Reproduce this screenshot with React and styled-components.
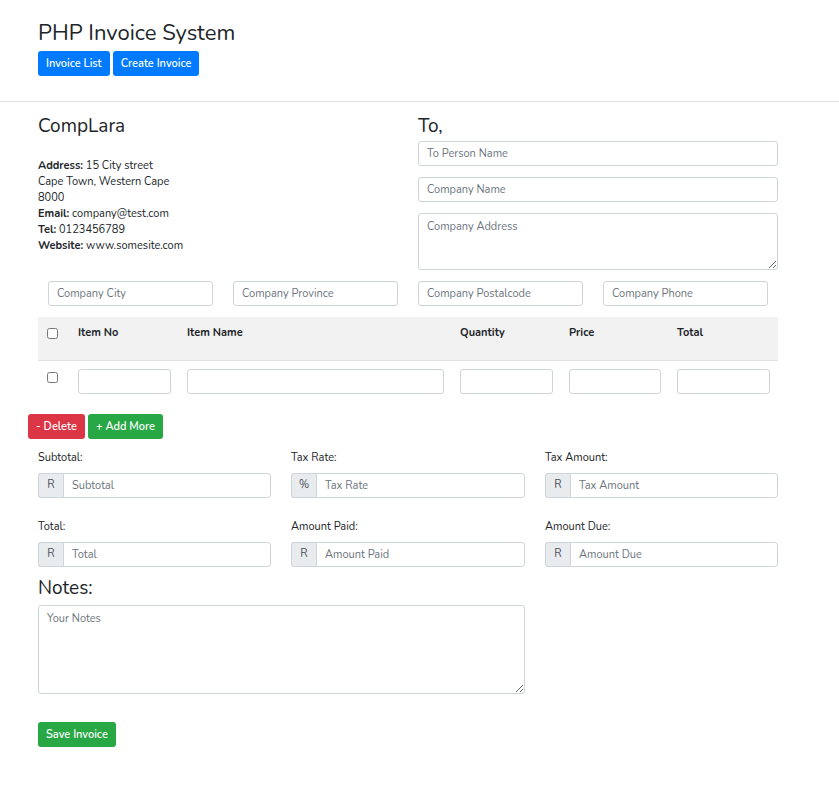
import React from 'react';
import styled, { createGlobalStyle } from 'styled-components';

const Global = createGlobalStyle`
  body {
    margin: 0;
    background: #fff;
    color: #212529;
    font-family: "Nunito", "Lato", "Open Sans", sans-serif;
    font-size: 11px;
    line-height: 16px;
  }
  * { box-sizing: border-box; }
`;

const Header = styled.header`
  padding: 20px 38px 25px;
  border-bottom: 1px solid #e2e2e2;
`;

const Title = styled.h1`
  margin: 0 0 5px;
  font-size: 22px;
  font-weight: 400;
  line-height: 26px;
`;

const Button = styled.button`
  height: 25px;
  padding: 0 8px;
  margin-right: 3px;
  border: none;
  border-radius: 3px;
  font-family: inherit;
  font-size: 11px;
  font-weight: 600;
  color: #fff;
  background: ${(p) => p.$bg || '#007bff'};
`;

const Main = styled.main`
  width: 740px;
  margin-left: 38px;
  padding-top: 13px;
`;

const TopRow = styled.div`
  display: grid;
  grid-template-columns: 360px 360px;
  gap: 20px;
`;

const Heading = styled.h2`
  margin: 0;
  font-size: 19px;
  font-weight: 400;
  line-height: 22px;
`;

const Address = styled.div`
  margin-top: 21px;
  b { font-weight: 700; }
`;

const Stack = styled.div`
  display: flex;
  flex-direction: column;
  gap: 11px;
  > h2 { margin-bottom: -7px; }
`;

const Input = styled.input`
  display: block;
  width: 100%;
  height: 25px;
  padding: 0 8px;
  border: 1px solid #ced4da;
  border-radius: 3px;
  font-family: inherit;
  font-size: 11px;
  color: #495057;
  &::placeholder { color: #6c757d; }
`;

const Area = styled.textarea`
  display: block;
  width: 100%;
  height: ${(p) => p.$h}px;
  padding: 5px 8px;
  border: 1px solid #ced4da;
  border-radius: 3px;
  font-family: inherit;
  font-size: 11px;
  line-height: 16px;
  resize: vertical;
  &::placeholder { color: #6c757d; }
`;

const FourRow = styled.div`
  display: grid;
  grid-template-columns: repeat(4, 1fr);
  margin-top: 11px;
  > * { padding: 0 10px; }
`;

const Table = styled.table`
  width: 740px;
  margin-top: 11px;
  border-collapse: collapse;
  th {
    background: #f2f2f2;
    text-align: left;
    font-weight: 700;
    vertical-align: top;
    height: 43px;
    padding: 8px 8px 0;
    border-bottom: 1px solid #dee2e6;
  }
  td {
    padding: 8px 8px 8px;
    vertical-align: top;
  }
`;

const Check = styled.input.attrs({ type: 'checkbox' })`
  margin: 3px 0 0 1px;
  width: 11px;
  height: 11px;
`;

const Actions = styled.div`
  margin: 12px 0 0 -10px;
  display: flex;
`;

const Totals = styled.div`
  display: grid;
  grid-template-columns: 233px 234px 233px;
  column-gap: 20px;
  row-gap: 21px;
  margin-top: 11px;
`;

const Label = styled.label`
  display: block;
  margin-bottom: 7px;
`;

const Group = styled.div`
  display: flex;
  height: 25px;
  > input {
    border-radius: 0 3px 3px 0;
  }
`;

const Addon = styled.span`
  display: flex;
  align-items: center;
  justify-content: center;
  width: 25px;
  flex: none;
  background: #e9ecef;
  border: 1px solid #ced4da;
  border-right: none;
  border-radius: 3px 0 0 3px;
  color: #495057;
  font-size: 11px;
`;

const Notes = styled.div`
  width: 487px;
  margin-top: 10px;
  > h2 { margin-bottom: 6px; }
`;

const Save = styled(Button)`
  margin-top: 28px;
`;

const totals = [
  ['Subtotal:', 'R', 'Subtotal'],
  ['Tax Rate:', '%', 'Tax Rate'],
  ['Tax Amount:', 'R', 'Tax Amount'],
  ['Total:', 'R', 'Total'],
  ['Amount Paid:', 'R', 'Amount Paid'],
  ['Amount Due:', 'R', 'Amount Due'],
];

export default function App() {
  return (
    <>
      <Global />
      <Header>
        <Title>PHP Invoice System</Title>
        <Button>Invoice List</Button>
        <Button>Create Invoice</Button>
      </Header>
      <Main>
        <TopRow>
          <div>
            <Heading>CompLara</Heading>
            <Address>
              <b>Address:</b> 15 City street<br />
              Cape Town, Western Cape<br />
              8000<br />
              <b>Email:</b> company@test.com<br />
              <b>Tel:</b> 0123456789<br />
              <b>Website:</b> www.somesite.com
            </Address>
          </div>
          <Stack>
            <Heading>To,</Heading>
            <Input placeholder="To Person Name" />
            <Input placeholder="Company Name" />
            <Area $h={57} placeholder="Company Address" />
          </Stack>
        </TopRow>
        <FourRow>
          <div><Input placeholder="Company City" /></div>
          <div><Input placeholder="Company Province" /></div>
          <div><Input placeholder="Company Postalcode" /></div>
          <div><Input placeholder="Company Phone" /></div>
        </FourRow>
        <Table>
          <colgroup>
            <col style={{ width: 32 }} />
            <col style={{ width: 109 }} />
            <col style={{ width: 273 }} />
            <col style={{ width: 109 }} />
            <col style={{ width: 108 }} />
            <col style={{ width: 109 }} />
          </colgroup>
          <thead>
            <tr>
              <th><Check /></th>
              <th>Item No</th>
              <th>Item Name</th>
              <th>Quantity</th>
              <th>Price</th>
              <th>Total</th>
            </tr>
          </thead>
          <tbody>
            <tr>
              <td><Check /></td>
              <td><Input /></td>
              <td><Input /></td>
              <td><Input /></td>
              <td><Input /></td>
              <td><Input /></td>
            </tr>
          </tbody>
        </Table>
        <Actions>
          <Button $bg="#dc3545">- Delete</Button>
          <Button $bg="#28a745">+ Add More</Button>
        </Actions>
        <Totals>
          {totals.map(([label, sign, ph]) => (
            <div key={label}>
              <Label>{label}</Label>
              <Group>
                <Addon>{sign}</Addon>
                <Input placeholder={ph} />
              </Group>
            </div>
          ))}
        </Totals>
        <Notes>
          <Heading>Notes:</Heading>
          <Area $h={89} placeholder="Your Notes" />
        </Notes>
        <Save $bg="#28a745">Save Invoice</Save>
      </Main>
    </>
  );
}
